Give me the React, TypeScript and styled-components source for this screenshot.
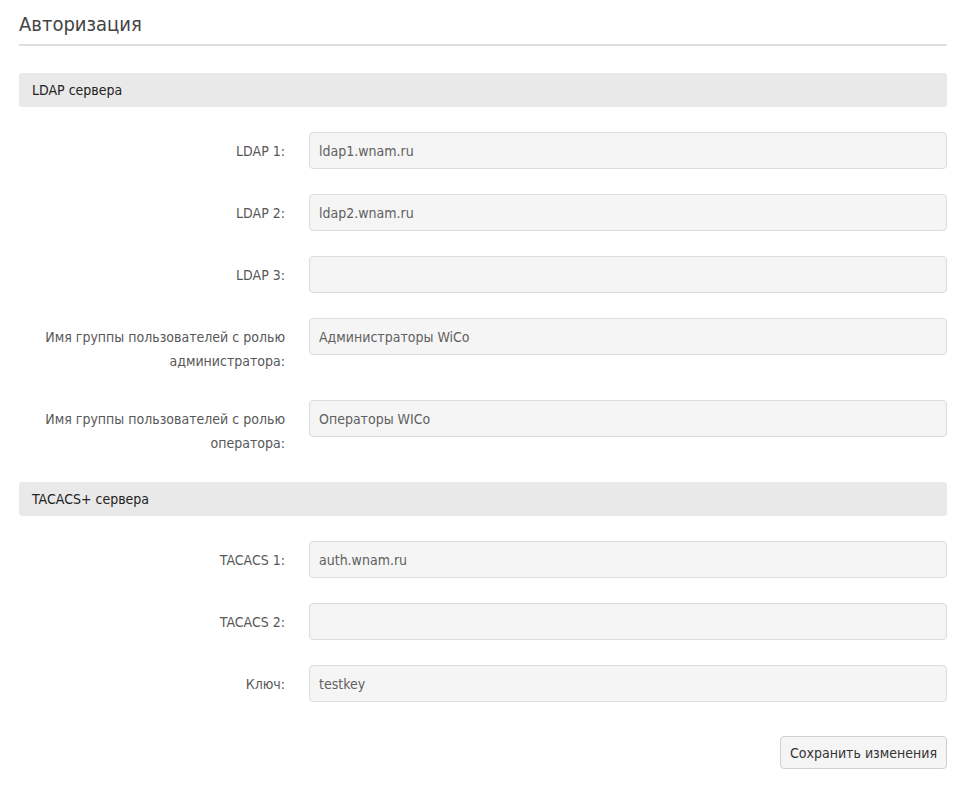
import React from "react";
import styled, { createGlobalStyle } from "styled-components";

const GlobalStyle = createGlobalStyle`
  html, body {
    margin: 0;
    padding: 0;
    background: #ffffff;
  }
  body {
    font-family: "DejaVu Sans Condensed", "Roboto", sans-serif;
    color: #444;
  }
  * {
    box-sizing: border-box;
  }
`;

type Field = {
  label: string;
  value: string;
};

const ldapFields: Field[] = [
  { label: "LDAP 1:", value: "ldap1.wnam.ru" },
  { label: "LDAP 2:", value: "ldap2.wnam.ru" },
  { label: "LDAP 3:", value: "" },
  { label: "Имя группы пользователей с ролью администратора:", value: "Администраторы WiCo" },
  { label: "Имя группы пользователей с ролью оператора:", value: "Операторы WICo" },
];

const tacacsFields: Field[] = [
  { label: "TACACS 1:", value: "auth.wnam.ru" },
  { label: "TACACS 2:", value: "" },
  { label: "Ключ:", value: "testkey" },
];

const App = () => {
  return (
    <Page>
      <GlobalStyle />
      <Title>Авторизация</Title>
      <Divider />
      <Form onSubmit={e => e.preventDefault()}>
        <SectionHeader>LDAP сервера</SectionHeader>
        {ldapFields.map(f => (
          <Row key={f.label}>
            <Label>{f.label}</Label>
            <Input type="text" defaultValue={f.value} />
          </Row>
        ))}
        <SectionHeader>TACACS+ сервера</SectionHeader>
        {tacacsFields.map(f => (
          <Row key={f.label}>
            <Label>{f.label}</Label>
            <Input type="text" defaultValue={f.value} />
          </Row>
        ))}
        <Footer>
          <SaveButton type="submit">Сохранить изменения</SaveButton>
        </Footer>
      </Form>
    </Page>
  );
};

const Page = styled.div`
  width: 965px;
  padding: 10px 18px 20px 19px;
`;
const Title = styled.h1`
  margin: 0;
  font-size: 20px;
  font-weight: normal;
  line-height: 28px;
  color: #444;
`;
const Divider = styled.hr`
  margin: 6px 0 27px;
  border: none;
  height: 2px;
  background: #e0e0e0;
`;
const Form = styled.form`
  display: flex;
  flex-direction: column;
`;
const SectionHeader = styled.div`
  height: 34px;
  display: flex;
  align-items: center;
  padding: 0 13px;
  margin-bottom: 25px;
  background: #e8e9e8;
  border-radius: 3px;
  font-size: 14px;
  color: #222;
`;
const Row = styled.div`
  display: grid;
  grid-template-columns: 266px 1fr;
  column-gap: 24px;
  align-items: start;
  margin-bottom: 25px;
`;
const Label = styled.label`
  text-align: right;
  padding: 7px 0 2px;
  font-size: 14px;
  line-height: 24px;
  color: #585858;
`;
const Input = styled.input`
  height: 37px;
  width: 100%;
  padding: 0 9px;
  font-family: inherit;
  font-size: 14px;
  color: #606060;
  background: #f5f5f5;
  border: 1px solid #dcdcdc;
  border-radius: 4px;
  outline: none;
`;
const Footer = styled.div`
  display: flex;
  justify-content: flex-end;
  margin-top: 9px;
`;
const SaveButton = styled.button`
  height: 33px;
  padding: 0 9px;
  font-family: inherit;
  font-size: 14px;
  color: #333;
  background: #f5f5f5;
  border: 1px solid #cfcfd4;
  border-radius: 4px;
  cursor: pointer;
`;

export default App;
